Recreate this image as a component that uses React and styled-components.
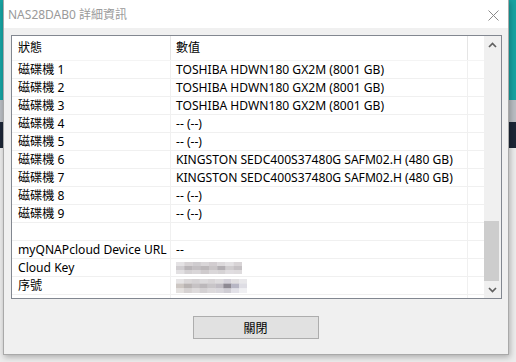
import React from "react";
import styled, { createGlobalStyle } from "styled-components";

const GlobalStyle = createGlobalStyle`
  html, body { margin: 0; padding: 0; }
  body {
    font-family: "Noto Sans", "Noto Sans CJK TC", sans-serif;
    font-size: 12px;
    color: #000;
  }
`;

const FONT = `"Noto Sans", "Noto Sans CJK TC", sans-serif`;

const Desktop = styled.div`
  position: relative;
  width: 516px;
  height: 362px;
  overflow: hidden;
  background: linear-gradient(
    to bottom,
    #17a3a2 0px,
    #17a3a2 100px,
    #b9bdc2 100px,
    #b9bdc2 122px,
    #1c2636 122px,
    #1c2636 148px,
    #ececec 148px
  );
`;

const Window = styled.div`
  position: absolute;
  left: 3px;
  top: 0;
  width: 506px;
  height: 355px;
  box-sizing: border-box;
  border: 1px solid #a9a9a9;
  border-top: none;
  background: #f0f0f0;
  box-shadow: 1px 2px 6px rgba(0, 0, 0, 0.28);
  display: flex;
  flex-direction: column;
`;

const TitleBar = styled.div`
  height: 28px;
  flex: none;
  background: #fff;
  display: flex;
  align-items: center;
  justify-content: space-between;
  padding: 0 9px 0 4px;
`;

const Title = styled.span`
  font-family: ${FONT};
  font-size: 12px;
  color: #9a9a9a;
  line-height: 28px;
  padding-top: 1px;
`;

const CloseIcon = styled.svg`
  display: block;
  margin-top: 2px;
`;

const Content = styled.div`
  flex: 1;
  display: flex;
  flex-direction: column;
  padding: 7px 6px 0 7px;
`;

const Panel = styled.div`
  height: 264px;
  box-sizing: border-box;
  border: 1px solid #828790;
  display: flex;
  background: #fff;
`;

const TableArea = styled.div`
  flex: 1;
  overflow: hidden;
  background: #fff;
`;

const Row = styled.div`
  display: grid;
  grid-template-columns: 159px 297px 16px;
  height: ${(p) => (p.$header ? "25px" : "18px")};
  box-sizing: border-box;
  border-bottom: 1px solid ${(p) => (p.$header ? "#f4f4f4" : "#f0f0f0")};
`;

const Cell = styled.div`
  box-sizing: border-box;
  border-right: 1px solid ${(p) => (p.$header ? "#e5e5e5" : "#f0f0f0")};
  padding-left: ${(p) => (p.$first ? "6px" : "5px")};
  font-family: ${FONT};
  font-size: 12.1px;
  line-height: ${(p) => (p.$header ? "24px" : "18px")};
  white-space: nowrap;
  overflow: hidden;
  display: flex;
  align-items: center;
  ${(p) => (p.$filler ? "border-right: none;" : "")}
`;

const Scrollbar = styled.div`
  width: 17px;
  flex: none;
  background: #f0f0f0;
  display: flex;
  flex-direction: column;
`;

const ArrowButton = styled.div`
  height: 17px;
  flex: none;
  display: flex;
  align-items: center;
  justify-content: center;
`;

const Track = styled.div`
  flex: 1;
  display: flex;
  flex-direction: column;
  justify-content: flex-end;
`;

const Thumb = styled.div`
  height: 60px;
  margin: 0 2px 0 0;
  background: #cdcdcd;
`;

const Footer = styled.div`
  display: flex;
  justify-content: center;
  padding-top: 17px;
  padding-right: 2px;
`;

const Button = styled.button`
  width: 126px;
  height: 23px;
  box-sizing: border-box;
  border: 1px solid #adadad;
  background: #e1e1e1;
  font-family: ${FONT};
  font-size: 12px;
  color: #000;
  padding: 0;
  margin: 0;
`;

const MosaicSvg = styled.svg`
  display: block;
`;

const Mosaic = ({ cols, rowsData, w, h }) => {
  const cw = w / cols;
  const ch = h / rowsData.length;
  return (
    <MosaicSvg width={w} height={h}>
      {rowsData.map((r, ri) =>
        r.map((c, ci) => (
          <rect key={ri + "-" + ci} x={ci * cw} y={ri * ch} width={cw + 0.3} height={ch + 0.3} fill={c} />
        ))
      )}
    </MosaicSvg>
  );
};

const keyMosaic = [
  ["#e4e2e4", "#d6d2d4", "#cfcccf", "#d9d6d8", "#d2cdd0", "#dcd9db", "#e3e1e3", "#d8d4d6"],
  ["#d0cdd0", "#b9b5b8", "#c3bfc2", "#bcb8ba", "#c9c5c7", "#b3afb3", "#d0cdcf", "#c5c1c4"],
  ["#e2e0e2", "#d4d1d3", "#d9d6d8", "#cfcbcd", "#dad7d9", "#d6d3d5", "#e0dde0", "#dedbdd"],
];

const serialMosaic = [
  ["#e6e4e5", "#dad7d8", "#d5d2d4", "#dcdadc", "#d8d5d7", "#dedcde", "#d3d0d8", "#e0dee0", "#e8e7ea"],
  ["#cdc7c3", "#b9b4b3", "#c6c2c4", "#bcb8bb", "#c8c5c8", "#c0bcc3", "#8e8a93", "#b7b6c4", "#dedde4"],
  ["#e4e1df", "#d6d2d2", "#dedbdc", "#d4d1d3", "#dcd9db", "#d9d7dc", "#cfcdd4", "#e2e1e8", "#f0f0f3"],
];

const rows = [
  ["磁碟機 1", "TOSHIBA HDWN180 GX2M (8001 GB)"],
  ["磁碟機 2", "TOSHIBA HDWN180 GX2M (8001 GB)"],
  ["磁碟機 3", "TOSHIBA HDWN180 GX2M (8001 GB)"],
  ["磁碟機 4", "-- (--)"],
  ["磁碟機 5", "-- (--)"],
  ["磁碟機 6", "KINGSTON SEDC400S37480G SAFM02.H (480 GB)"],
  ["磁碟機 7", "KINGSTON SEDC400S37480G SAFM02.H (480 GB)"],
  ["磁碟機 8", "-- (--)"],
  ["磁碟機 9", "-- (--)"],
  ["", ""],
  ["myQNAPcloud Device URL", "--"],
  ["Cloud Key", <Mosaic key="k" cols={8} rowsData={keyMosaic} w={66} h={12} />],
  ["序號", <Mosaic key="s" cols={9} rowsData={serialMosaic} w={71} h={14} />],
  ["", ""],
];

const Chevron = ({ up }) => (
  <svg width="9" height="6" viewBox="0 0 9 6">
    <polyline
      points={up ? "1,5 4.5,1.5 8,5" : "1,1 4.5,4.5 8,1"}
      fill="none"
      stroke="#606060"
      strokeWidth="1.7"
    />
  </svg>
);

export default function App() {
  return (
    <>
      <GlobalStyle />
      <Desktop>
        <Window>
          <TitleBar>
            <Title>NAS28DAB0 詳細資訊</Title>
            <CloseIcon width="11" height="11" viewBox="0 0 11 11">
              <line x1="0.5" y1="0.5" x2="10.5" y2="10.5" stroke="#8a8a8a" strokeWidth="1" />
              <line x1="10.5" y1="0.5" x2="0.5" y2="10.5" stroke="#8a8a8a" strokeWidth="1" />
            </CloseIcon>
          </TitleBar>
          <Content>
            <Panel>
              <TableArea>
                <Row $header>
                  <Cell $header $first>狀態</Cell>
                  <Cell $header>數值</Cell>
                  <Cell $header $filler />
                </Row>
                {rows.map(([k, v], i) => (
                  <Row key={i}>
                    <Cell $first>{k}</Cell>
                    <Cell>{v}</Cell>
                    <Cell $filler />
                  </Row>
                ))}
              </TableArea>
              <Scrollbar>
                <ArrowButton>
                  <Chevron up />
                </ArrowButton>
                <Track>
                  <Thumb />
                </Track>
                <ArrowButton>
                  <Chevron />
                </ArrowButton>
              </Scrollbar>
            </Panel>
            <Footer>
              <Button>關閉</Button>
            </Footer>
          </Content>
        </Window>
      </Desktop>
    </>
  );
}
